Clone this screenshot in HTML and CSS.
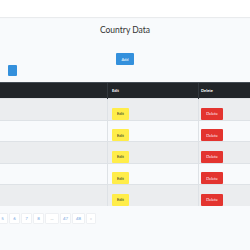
FILE: index.html
```html
<!DOCTYPE html>
<html lang="en">
<head>
  <meta charset="UTF-8" />
  <title>Country Data</title>
  <link rel="stylesheet" href="styles.css">
</head>
<body>

  <div class="navbar"></div>

  <h1 class="title">Country Data</h1>

  <div class="add-wrap">
    <button class="btn btn-primary btn-add">Add</button>
  </div>

  <div class="side-wrap">
    <button class="btn btn-primary btn-side"></button>
  </div>

  <table class="data-table">
    <thead>
      <tr>
        <th class="col-name"></th>
        <th class="col-edit">Edit</th>
        <th class="col-delete">Delete</th>
      </tr>
    </thead>
    <tbody>
      <tr class="stripe">
        <td class="col-name"></td>
        <td class="col-edit"><button class="btn btn-warning">Edit</button></td>
        <td class="col-delete"><button class="btn btn-danger">Delete</button></td>
      </tr>
      <tr>
        <td class="col-name"></td>
        <td class="col-edit"><button class="btn btn-warning">Edit</button></td>
        <td class="col-delete"><button class="btn btn-danger">Delete</button></td>
      </tr>
      <tr class="stripe">
        <td class="col-name"></td>
        <td class="col-edit"><button class="btn btn-warning">Edit</button></td>
        <td class="col-delete"><button class="btn btn-danger">Delete</button></td>
      </tr>
      <tr>
        <td class="col-name"></td>
        <td class="col-edit"><button class="btn btn-warning">Edit</button></td>
        <td class="col-delete"><button class="btn btn-danger">Delete</button></td>
      </tr>
      <tr class="stripe">
        <td class="col-name"></td>
        <td class="col-edit"><button class="btn btn-warning">Edit</button></td>
        <td class="col-delete"><button class="btn btn-danger">Delete</button></td>
      </tr>
    </tbody>
  </table>

  <ul class="pagination">
    <li class="page-item">5</li>
    <li class="page-item">6</li>
    <li class="page-item">7</li>
    <li class="page-item">8</li>
    <li class="page-item dots">...</li>
    <li class="page-item">47</li>
    <li class="page-item wide">48</li>
    <li class="page-item last">&raquo;</li>
  </ul>

</body>
</html>
```

FILE: styles.css
```css
body {
  margin: 0;
  background-color: #f8fafc;
  font-family: Lato, "Noto Sans", sans-serif;
  color: #212529;
}

/* top bar */
.navbar {
  height: 17px;
  background: #ffffff;
  box-shadow: 0px 1px 1px rgba(0, 0, 0, 0.06);
}

.title {
  margin: 0;
  padding-top: 6px;
  font-size: 8.5px;
  line-height: 14px;
  font-weight: 400;
  text-align: center;
  color: #333333;
}

.btn {
  border: none;
  padding: 0;
  border-radius: 1px;
  font-family: inherit;
  font-size: 4px;
  cursor: pointer;
}

.btn-primary {
  background: #3490dc;
  color: #ffffff;
}

.btn-warning {
  background: #ffed4a;
  color: #212529;
  width: 17px;
  height: 12px;
}

.btn-danger {
  background: #e3342f;
  color: #ffffff;
  width: 22px;
  height: 12px;
}

.add-wrap {
  margin-top: 16px;
  text-align: center;
  height: 12px;
}

.btn-add {
  width: 18px;
  height: 12px;
  display: inline-block;
  vertical-align: top;
}

.side-wrap {
  height: 11px;
  padding-left: 8px;
}

.btn-side {
  display: block;
  width: 9px;
  height: 11px;
}

.data-table {
  margin-top: 6px;
  width: 100%;
  border-collapse: collapse;
  table-layout: fixed;
}

.data-table th {
  height: 15px;
  padding: 0;
  background: #212529;
  color: #ffffff;
  font-size: 4px;
  font-weight: bold;
  text-align: left;
  border-top: 1px solid #454d55;
  border-left: 1px solid #32383e;
}

.data-table td {
  height: 19px;
  padding: 0;
  border-top: 1px solid #dee2e6;
  border-left: 1px solid #dee2e6;
  vertical-align: middle;
}

.data-table .col-name {
  width: 107px;
  border-left: none;
}

.data-table .col-edit {
  width: 86px;
  padding-left: 4px;
}

.data-table .col-delete {
  padding-left: 2px;
}

.stripe td {
  background: rgba(0, 0, 0, 0.05);
}

.pagination {
  list-style: none;
  margin: 7px 0 0 -3px;
  padding: 0;
  display: flex;
  gap: 1px;
}

.page-item {
  height: 11px;
  width: 11px;
  box-sizing: border-box;
  border: 1px solid #eef0f3;
  border-radius: 1px;
  background: #ffffff;
  color: #6f9fe0;
  font-size: 4.5px;
  line-height: 9px;
  text-align: center;
}

.page-item.dots {
  width: 14px;
  color: #9aa3ad;
}

.page-item.wide {
  width: 13px;
}

.page-item.last {
  width: 10px;
  color: #b8c0c8;
}
```
